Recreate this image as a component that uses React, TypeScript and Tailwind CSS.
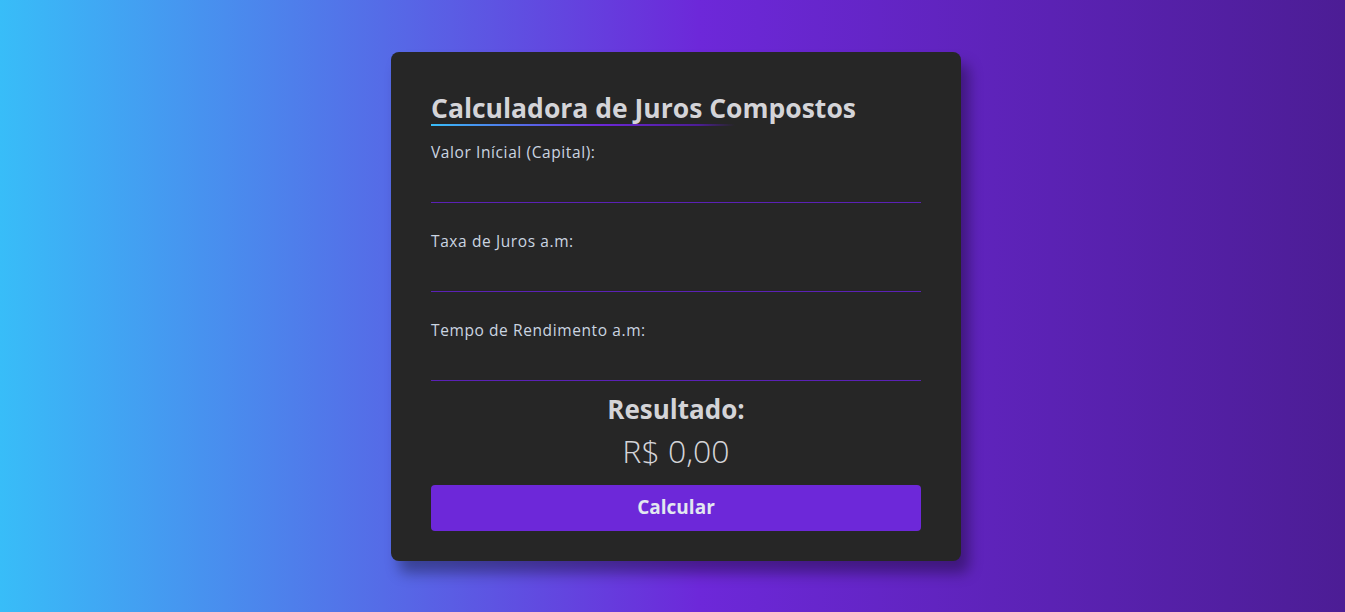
import { useState } from 'react'

const fields = [
  { id: 'capital', label: 'Valor Inícial (Capital):' },
  { id: 'taxa', label: 'Taxa de Juros a.m:' },
  { id: 'tempo', label: 'Tempo de Rendimento a.m:' },
]

export default function App() {
  const [values, setValues] = useState<Record<string, string>>({ capital: '', taxa: '', tempo: '' })
  const [result, setResult] = useState(0)

  const calcular = () => {
    const c = parseFloat(values.capital.replace(',', '.')) || 0
    const i = (parseFloat(values.taxa.replace(',', '.')) || 0) / 100
    const t = parseFloat(values.tempo) || 0
    setResult(c * Math.pow(1 + i, t))
  }

  return (
    <div className="min-h-[612px] w-full flex items-center justify-center bg-[linear-gradient(to_right,#38bdf8_0%,#6d28d9_52%,#4c1d95_100%)] font-['Open_Sans',sans-serif]">
      <div className="ml-[7px] w-[570px] h-[509px] bg-[#262626] rounded-lg px-10 pt-10 shadow-[8px_12px_14px_rgba(0,0,0,0.35)]">
        <h1 className="text-[26.5px] leading-[32px] font-bold text-[#d4d4d8]">Calculadora de Juros Compostos</h1>
        <div className="h-[2px] w-[304px] bg-[linear-gradient(to_right,#38bdf8,#6d28d9_55%,#4c1d95_88%,transparent)]" />

        <div className="mt-[16px]">
          {fields.map(f => (
            <div key={f.id} className="mb-7">
              <label htmlFor={f.id} className="block text-[15.5px] leading-[21px] font-medium tracking-[0.6px] text-[#cbd5e1]">{f.label}</label>
              <input id={f.id} value={values[f.id]}
                onChange={e => setValues({ ...values, [f.id]: e.target.value })}
                className="block w-full h-10 bg-transparent border-b border-[#5b21b6] outline-none text-[#d4d4d8] text-[15px]" />
            </div>
          ))}
        </div>

        <div className="-mt-[18px] text-center">
          <div className="text-[26px] leading-[36px] font-bold text-[#d4d4d8]">Resultado:</div>
          <div className="text-[32px] leading-[40px] font-light text-[#d4d4d8] mt-1">
            R$ {result.toLocaleString('pt-BR', { minimumFractionDigits: 2, maximumFractionDigits: 2 })}
          </div>
        </div>

        <button onClick={calcular}
          className="mt-[14px] w-full h-[46px] rounded bg-[#6d28d9] text-[19px] font-bold text-[#e2e8f0]">
          Calcular
        </button>
      </div>
    </div>
  )
}
